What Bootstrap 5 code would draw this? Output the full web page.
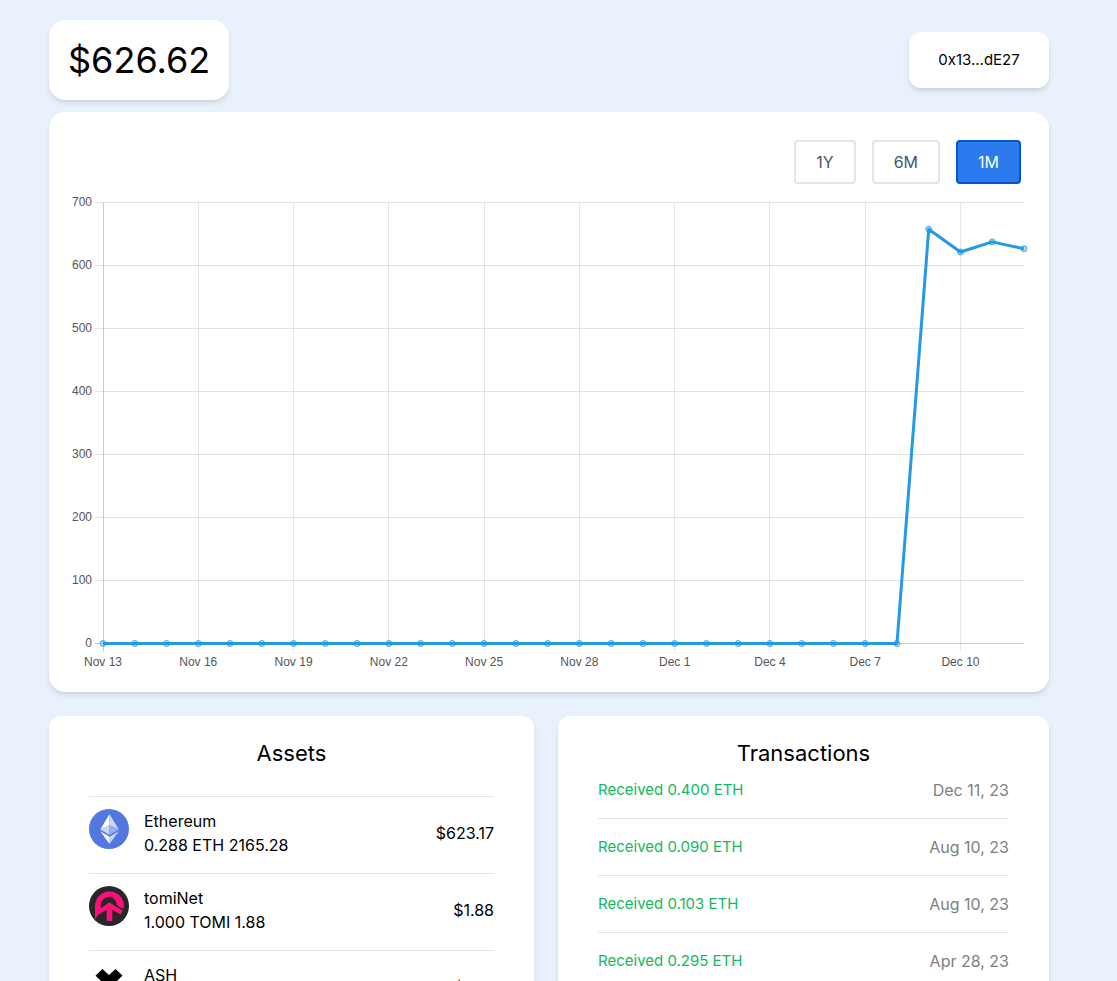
<!DOCTYPE html>
<html lang="en">
<head>
<meta charset="utf-8">
<meta name="viewport" content="width=device-width, initial-scale=1">
<title>Portfolio</title>
<link href="https://cdn.jsdelivr.net/npm/bootstrap@5.3.0/dist/css/bootstrap.min.css" rel="stylesheet">
<style>
  body { background: #e9f1fd; color: #000; font-family: Inter, "Liberation Sans", sans-serif; font-size: 16px; line-height: 24px; }
  .page-scroll { padding-right: 19px; }
  .page-inner { max-width: 1000px; padding: 20px 0; }
  .surface { background: #fff; border-radius: 16px; box-shadow: 0 4px 6px -1px rgba(0,0,0,.1), 0 2px 4px -2px rgba(0,0,0,.1); }
  .surface-sm { border-radius: 12px; }
  .balance { font-size: 36px; line-height: 40px; padding: 20px 19px; }
  .wallet { border: 0; color: #000; font-size: 15px; min-width: 140px; padding: 16px 20px; }
  .chart-box { margin-top: 12px; padding: 28px 20px 16px; }
  .ranges { gap: 16px; padding-right: 8px; margin-bottom: 12px; }
  .range-btn { background: #fff; border: 2px solid #e5e5e5; border-radius: 4px; color: #475569; padding: 8px 20px; }
  .range-btn.active { background: #2b7bee; border-color: #0358c7; color: #fff; }
  .chart { font-family: "Liberation Sans", Arial, sans-serif; font-size: 12px; fill: #555; }
  .panels { display: grid; grid-template-columns: 485fr 491fr; gap: 24px; margin-top: 24px; }
  .panel { padding: 20px 40px; min-height: 420px; }
  .panel h2 { font-size: 22px; line-height: 34px; font-weight: 400; margin: 0; text-align: center; }
  .assets { margin-top: 26px; }
  .assets li { border-top: 1px solid #e2e4e9; padding: 12px 0 16px; }
  .coin { width: 40px; height: 40px; margin-right: 15px; }
  .txs { margin-top: 8px; }
  .txs li { border-bottom: 1px solid #e2e4e9; padding-bottom: 16px; margin-bottom: 16px; }
  .received { color: #11b95c; font-size: 15px; }
  .when { color: #808080; }
</style>
</head>
<body class="vh-100 overflow-hidden">
<div class="page-scroll">
<main class="page-inner mx-auto">
  <header class="d-flex justify-content-between align-items-center">
    <div class="surface balance">$626.62</div>
    <button type="button" class="surface surface-sm wallet">0x13...dE27</button>
  </header>

  <section class="surface chart-box" aria-label="Balance history">
    <div class="ranges d-flex justify-content-end">
      <button type="button" class="range-btn">1Y</button>
      <button type="button" class="range-btn">6M</button>
      <button type="button" class="range-btn active">1M</button>
    </div>
    <svg class="chart d-block w-100" id="chart" viewBox="0 0 960 480"></svg>
  </section>

  <div class="panels">
    <section class="surface surface-sm panel">
      <h2>Assets</h2>
      <ul class="assets list-unstyled mb-0">
        <li class="d-flex">
          <svg class="coin flex-shrink-0" viewBox="0 0 40 40" aria-hidden="true">
            <circle cx="20" cy="20" r="20" fill="#5376e0"/>
            <path d="M20.5 5v11.200L11.300 20.500z" fill="#fff"/>
            <path d="M20.500 5v11.200l9.300 4.300z" fill="#c9d5f7"/>
            <path d="M20.500 16.200v9.800l-9.200-5.500z" fill="#c9d5f7"/>
            <path d="M20.500 16.200v9.800l9.300-5.500z" fill="#98adef"/>
            <path d="M11.300 22.300l9.200 5.400v7.300z" fill="#fff"/>
            <path d="M29.800 22.300l-9.300 5.400v7.300z" fill="#c9d5f7"/>
          </svg>
          <div class="flex-grow-1"><div>Ethereum</div><div>0.288 ETH 2165.28</div></div>
          <div class="align-self-center">$623.17</div>
        </li>
        <li class="d-flex">
          <svg class="coin flex-shrink-0" viewBox="0 0 40 40" aria-hidden="true">
            <circle cx="20" cy="20" r="20" fill="#272727"/>
            <path d="M6 33.500V19.500A14.500 14.500 0 0 1 35 20.500L34.300 23.500 27.800 20A8.500 8.500 0 0 0 20.500 10.800 9 9 0 0 0 11.500 20.500L12 22.300 20.300 16.200 33.800 24.500 31.500 28.500 23.300 23.800V35H17.700V23.800L9 29z" fill="#ff0f7b"/>
            <path d="M24 17.800L34.500 24" stroke="#272727" stroke-width="1.500"/>
          </svg>
          <div class="flex-grow-1"><div>tomiNet</div><div>1.000 TOMI 1.88</div></div>
          <div class="align-self-center">$1.88</div>
        </li>
        <li class="d-flex">
          <svg class="coin flex-shrink-0" viewBox="0 0 40 40" aria-hidden="true">
            <path d="M13.500 6l6.500 6 6.500-6 7 6.500-7.500 7.500 7.500 7.500-7 6.500-6.500-6-6.500 6-7-6.500 7.500-7.500-7.500-7.500z" fill="#000"/>
          </svg>
          <div class="flex-grow-1"><div>ASH</div><div>0.500 ASH 1.57</div></div>
          <div class="align-self-center">$1.57</div>
        </li>
      </ul>
    </section>

    <section class="surface surface-sm panel">
      <h2>Transactions</h2>
      <ul class="txs list-unstyled mb-0">
        <li class="d-flex justify-content-between"><span class="received">Received 0.400 ETH</span><span class="when">Dec 11, 23</span></li>
        <li class="d-flex justify-content-between"><span class="received">Received 0.090 ETH</span><span class="when">Aug 10, 23</span></li>
        <li class="d-flex justify-content-between"><span class="received">Received 0.103 ETH</span><span class="when">Aug 10, 23</span></li>
        <li class="d-flex justify-content-between"><span class="received">Received 0.295 ETH</span><span class="when">Apr 28, 23</span></li>
      </ul>
    </section>
  </div>
</main>
</div>
<script src="https://cdn.jsdelivr.net/npm/bootstrap@5.3.0/dist/js/bootstrap.bundle.min.js"></script>
<script>
  // Daily balances, Nov 13 to Dec 12
  const values = [...Array(26).fill(0), 657.5, 621.5, 637.5, 626.62];
  const left = 34, right = 955, top0 = 6.5, bottom = 447.5;
  const x = i => left + (right - left) * i / (values.length - 1);
  const y = v => bottom - (bottom - top0) * v / 700;
  const label = i => i < 18 ? 'Nov ' + (13 + i) : 'Dec ' + (i - 17);
  let out = '';
  for (let v = 0; v <= 700; v += 100) {
    out += `<path d="M${left - 8} ${y(v)}H${right}" stroke="${v ? '#e2e2e2' : '#cdcdcd'}"/>`;
    out += `<text x="23" y="${y(v) + 3}" text-anchor="end">${v}</text>`;
  }
  for (let i = 0; i < values.length; i += 3) {
    const gx = Math.floor(x(i)) + 0.5;
    out += `<path d="M${gx} ${top0}V${bottom + 8}" stroke="#000" stroke-opacity="${i ? 0.1 : 0.2}"/>`;
    out += `<text x="${x(i)}" y="470" text-anchor="middle">${label(i)}</text>`;
  }
  const points = values.map((v, i) => x(i) + ',' + y(v));
  out += `<polyline points="${points.join(' ')}" fill="none" stroke="#239ae3" stroke-width="3" stroke-linejoin="round"/>`;
  values.forEach((v, i) => {
    out += `<circle cx="${x(i)}" cy="${y(v)}" r="3" fill="#239ae3" fill-opacity=".35" stroke="#239ae3" stroke-opacity=".8"/>`;
  });
  document.getElementById('chart').innerHTML = out;
</script>
</body>
</html>
